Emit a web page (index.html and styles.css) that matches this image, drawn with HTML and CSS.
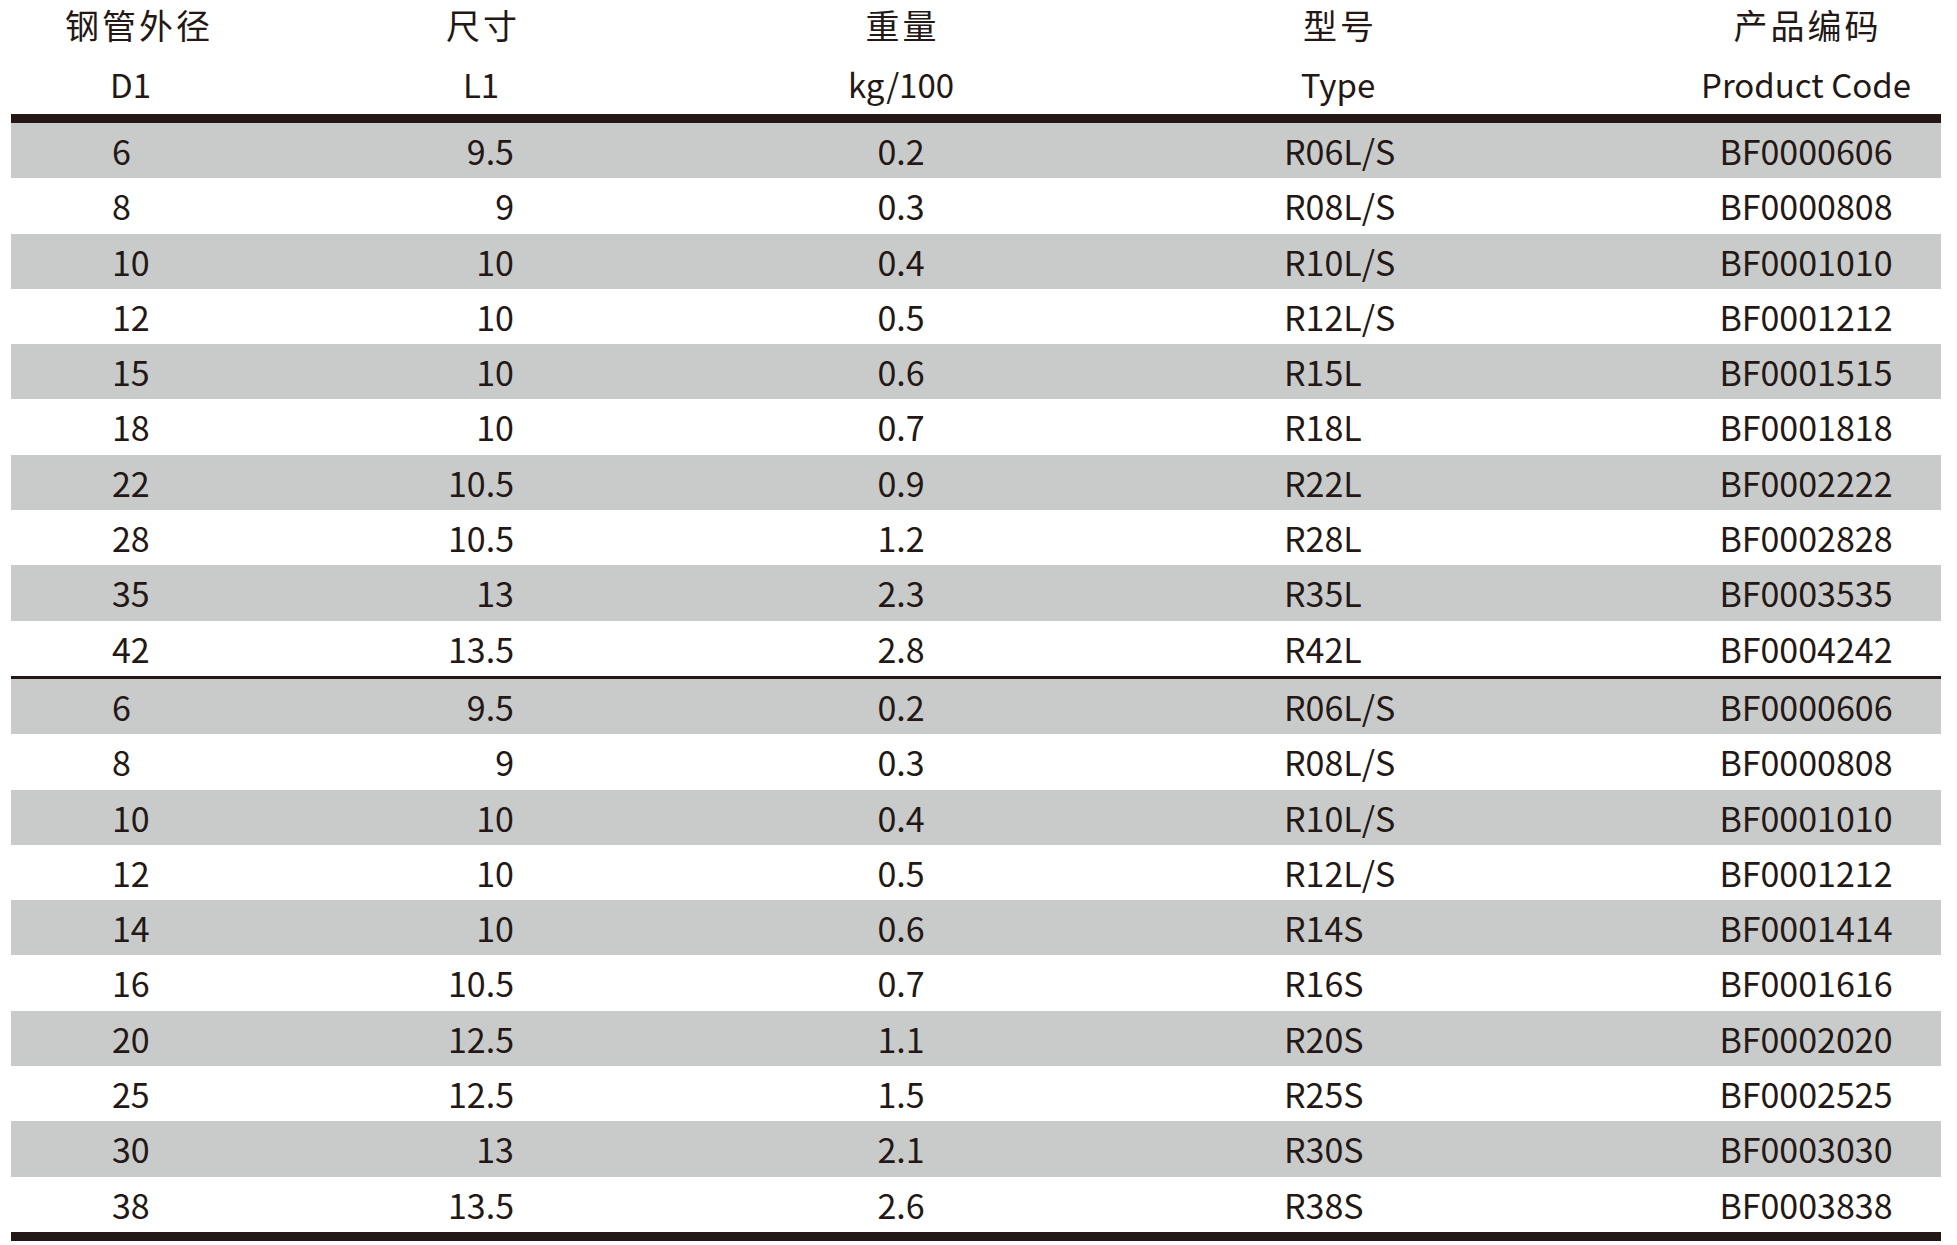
FILE: index.html
```html
<!DOCTYPE html>
<html lang="zh">
<head>
<meta charset="utf-8">
<title>规格表</title>
<link rel="stylesheet" href="styles.css">
</head>
<body>
<div class="sheet">
  <div class="head">
    <div class="hrow cn">
      <div class="c1 h">钢管外径</div>
      <div class="c2 h">尺寸</div>
      <div class="c3 h">重量</div>
      <div class="c4 h">型号</div>
      <div class="c5 h">产品编码</div>
    </div>
    <div class="hrow en">
      <div class="c1 h">D1</div>
      <div class="c2 h">L1</div>
      <div class="c3 h">kg/100</div>
      <div class="c4 h">Type</div>
      <div class="c5 h">Product Code</div>
    </div>
  </div>
  <div class="bar"></div>
  <div class="group">
    <div class="row"><div class="c1">6</div><div class="c2">9.5</div><div class="c3">0.2</div><div class="c4">R06L/S</div><div class="c5">BF0000606</div></div>
    <div class="row"><div class="c1">8</div><div class="c2">9</div><div class="c3">0.3</div><div class="c4">R08L/S</div><div class="c5">BF0000808</div></div>
    <div class="row"><div class="c1">10</div><div class="c2">10</div><div class="c3">0.4</div><div class="c4">R10L/S</div><div class="c5">BF0001010</div></div>
    <div class="row"><div class="c1">12</div><div class="c2">10</div><div class="c3">0.5</div><div class="c4">R12L/S</div><div class="c5">BF0001212</div></div>
    <div class="row"><div class="c1">15</div><div class="c2">10</div><div class="c3">0.6</div><div class="c4">R15L</div><div class="c5">BF0001515</div></div>
    <div class="row"><div class="c1">18</div><div class="c2">10</div><div class="c3">0.7</div><div class="c4">R18L</div><div class="c5">BF0001818</div></div>
    <div class="row"><div class="c1">22</div><div class="c2">10.5</div><div class="c3">0.9</div><div class="c4">R22L</div><div class="c5">BF0002222</div></div>
    <div class="row"><div class="c1">28</div><div class="c2">10.5</div><div class="c3">1.2</div><div class="c4">R28L</div><div class="c5">BF0002828</div></div>
    <div class="row"><div class="c1">35</div><div class="c2">13</div><div class="c3">2.3</div><div class="c4">R35L</div><div class="c5">BF0003535</div></div>
    <div class="row"><div class="c1">42</div><div class="c2">13.5</div><div class="c3">2.8</div><div class="c4">R42L</div><div class="c5">BF0004242</div></div>
  </div>
  <div class="thin"></div>
  <div class="group">
    <div class="row"><div class="c1">6</div><div class="c2">9.5</div><div class="c3">0.2</div><div class="c4">R06L/S</div><div class="c5">BF0000606</div></div>
    <div class="row"><div class="c1">8</div><div class="c2">9</div><div class="c3">0.3</div><div class="c4">R08L/S</div><div class="c5">BF0000808</div></div>
    <div class="row"><div class="c1">10</div><div class="c2">10</div><div class="c3">0.4</div><div class="c4">R10L/S</div><div class="c5">BF0001010</div></div>
    <div class="row"><div class="c1">12</div><div class="c2">10</div><div class="c3">0.5</div><div class="c4">R12L/S</div><div class="c5">BF0001212</div></div>
    <div class="row"><div class="c1">14</div><div class="c2">10</div><div class="c3">0.6</div><div class="c4">R14S</div><div class="c5">BF0001414</div></div>
    <div class="row"><div class="c1">16</div><div class="c2">10.5</div><div class="c3">0.7</div><div class="c4">R16S</div><div class="c5">BF0001616</div></div>
    <div class="row"><div class="c1">20</div><div class="c2">12.5</div><div class="c3">1.1</div><div class="c4">R20S</div><div class="c5">BF0002020</div></div>
    <div class="row"><div class="c1">25</div><div class="c2">12.5</div><div class="c3">1.5</div><div class="c4">R25S</div><div class="c5">BF0002525</div></div>
    <div class="row"><div class="c1">30</div><div class="c2">13</div><div class="c3">2.1</div><div class="c4">R30S</div><div class="c5">BF0003030</div></div>
    <div class="row"><div class="c1">38</div><div class="c2">13.5</div><div class="c3">2.6</div><div class="c4">R38S</div><div class="c5">BF0003838</div></div>
  </div>
  <div class="bar bottom"></div>
</div>
</body>
</html>
```

FILE: styles.css
```css
html, body {
  margin: 0;
  padding: 0;
  background: #ffffff;
}

body {
  font-family: "Noto Sans CJK SC", "Noto Sans", sans-serif;
  color: #231815;
}

.sheet {
  width: 1930px;
  margin-left: 11px;
}

.head {
  height: 114px;
}

.hrow,
.row {
  display: grid;
  grid-template-columns: 300px 300px 580px 480px 270px;
}

.hrow.cn {
  height: 49px;
  line-height: 49px;
  font-size: 34px;
  letter-spacing: 3px;
}

.hrow.en {
  margin-top: 7px;
  height: 56px;
  line-height: 56px;
  font-size: 33px;
}

.h {
  white-space: nowrap;
}

.hrow.cn .c1 { padding-left: 54px; }
.hrow.en .c1 { padding-left: 99px; }
.hrow .c2 { text-align: center; padding-left: 40px; }
.hrow.cn .c2 { padding-left: 44px; }
.hrow .c3 { text-align: center; }
.hrow.cn .c3 { padding-left: 3px; }
.hrow .c4 { text-align: center; padding-right: 186px; }
.hrow.cn .c4 { padding-right: 182px; }
.hrow .c5 { text-align: center; }
.hrow.cn .c5 { padding-left: 3px; }

.bar {
  height: 9px;
  background: #231815;
}

.thin {
  height: 3px;
  background: #231815;
}

.row {
  height: 55.3px;
  line-height: 55.3px;
  font-size: 34px;
  white-space: nowrap;
}

.row:nth-child(odd) {
  background: #c9caca;
}

.row .c1 { padding-left: 101px; }
.row .c2 { text-align: right; padding-right: 97px; }
.row .c3 { text-align: center; }
.row .c4 { padding-left: 93px; }
.row .c5 { text-align: center; }
```
